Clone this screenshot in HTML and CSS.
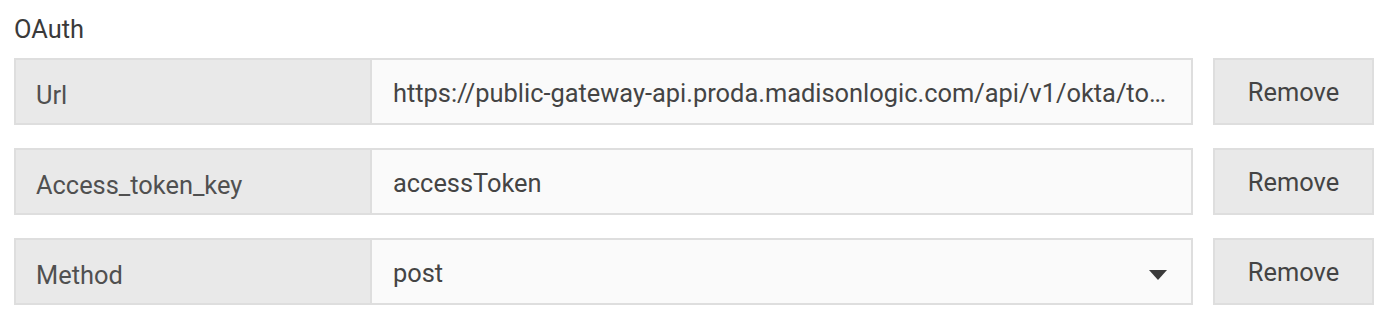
FILE: index.html
```html
<!DOCTYPE html>
<html>
<head>
<meta charset="utf-8">
<link rel="stylesheet" href="styles.css">
</head>
<body>
<div class="page">
  <div class="title">OAuth</div>
  <div class="rows">
    <div class="row">
      <div class="group">
        <div class="label">Url</div>
        <div class="value"><span class="text">https://public-gateway-api.proda.madisonlogic.com/api/v1/okta/token</span></div>
      </div>
      <button class="remove">Remove</button>
    </div>
    <div class="row">
      <div class="group">
        <div class="label">Access_token_key</div>
        <div class="value"><span class="text">accessToken</span></div>
      </div>
      <button class="remove">Remove</button>
    </div>
    <div class="row">
      <div class="group">
        <div class="label">Method</div>
        <div class="value select"><span class="text">post</span><span class="caret"></span></div>
      </div>
      <button class="remove">Remove</button>
    </div>
  </div>
</div>
</body>
</html>
```

FILE: styles.css
```css
html, body {
  margin: 0;
  padding: 0;
  background: #ffffff;
}

body {
  font-family: Roboto, "Liberation Sans", sans-serif;
  font-size: 25.4px;
  color: #505050;
}

.page {
  padding: 14px 16px 0 14px;
}

.title {
  line-height: 30px;
  height: 30px;
  margin-bottom: 14px;
  color: #3a3a3a;
}

.rows {
  display: flex;
  flex-direction: column;
  gap: 23px;
}

.row {
  display: flex;
  gap: 20px;
  height: 67px;
}

.group {
  flex: 1;
  min-width: 0;
  display: flex;
  border: 2px solid #dedede;
  box-sizing: border-box;
}

.label {
  width: 356px;
  flex: none;
  background: #e9e9e9;
  border-right: 2px solid #dedede;
  display: flex;
  align-items: center;
  padding: 6px 0 0 20px;
  box-sizing: border-box;
}

.value {
  flex: 1;
  min-width: 0;
  background: #fafafa;
  display: flex;
  align-items: center;
  padding: 3px 19px 0 21px;
  box-sizing: border-box;
  color: #444444;
}

.select {
  padding-right: 24px;
}

.text {
  white-space: nowrap;
  overflow: hidden;
  text-overflow: ellipsis;
  min-width: 0;
  flex: 1;
}

.caret {
  flex: none;
  width: 0;
  height: 0;
  border-left: 9px solid transparent;
  border-right: 9px solid transparent;
  border-top: 10px solid #3a3a3a;
  margin: 3px 0 0 0;
}

.remove {
  width: 161px;
  flex: none;
  height: 67px;
  background: #e9e9e9;
  border: 2px solid #dedede;
  box-sizing: border-box;
  font-family: Roboto, "Liberation Sans", sans-serif;
  font-size: 25.4px;
  color: #444444;
  padding: 0;
  margin: 0;
}
```
